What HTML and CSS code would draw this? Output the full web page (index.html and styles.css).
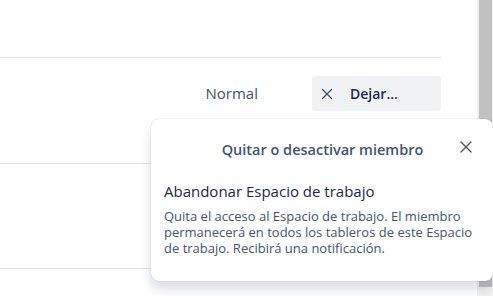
FILE: index.html
```html
<!DOCTYPE html>
<html lang="es">
<head>
<meta charset="utf-8">
<link rel="stylesheet" href="styles.css">
</head>
<body>
<div class="page">
  <div class="content">
    <div class="row row-top"></div>
    <div class="row row-member">
      <span class="role">Normal</span>
      <button class="leave-btn" type="button">
        <svg class="x-icon" width="12" height="12" viewBox="0 0 12 12" aria-hidden="true"><path d="M1.5 1.5 L10.5 10.5 M10.5 1.5 L1.5 10.5" stroke="currentColor" stroke-width="1.3" stroke-linecap="round"/></svg>
        <span>Dejar...</span>
      </button>
    </div>
    <div class="row row-empty"></div>
  </div>
  <div class="scrollbar"><div class="thumb"></div></div>
</div>

<div class="popover">
  <div class="pop-header">
    <span class="pop-title">Quitar o desactivar miembro</span>
    <button class="pop-close" type="button" aria-label="Cerrar">
      <svg width="12" height="12" viewBox="0 0 12 12" aria-hidden="true"><path d="M1 1 L11 11 M11 1 L1 11" stroke="currentColor" stroke-width="1.3" stroke-linecap="round"/></svg>
    </button>
  </div>
  <div class="pop-body">
    <div class="option-title">Abandonar Espacio de trabajo</div>
    <p class="option-desc">Quita el acceso al Espacio de trabajo. El miembro permanecerá en todos los tableros de este Espacio de trabajo. Recibirá una notificación.</p>
  </div>
</div>
</body>
</html>
```

FILE: styles.css
```css
html, body {
  margin: 0;
  padding: 0;
  background: #ffffff;
  font-family: "Open Sans", "Noto Sans", sans-serif;
  color: #172b4d;
}

.page {
  display: flex;
  height: 296px;
  overflow: hidden;
}

.content {
  width: 441px;
  flex: none;
}

.row {
  border-bottom: 1px solid #dfe1e6;
  box-sizing: border-box;
}

.row-top {
  height: 58px;
}

.row-member {
  height: 106px;
  display: flex;
  align-items: flex-start;
  justify-content: flex-end;
  padding-top: 18px;
}

.row-empty {
  height: 105px;
}

.role {
  font-size: 15px;
  color: #44546f;
  line-height: 35px;
  margin-right: 54px;
}

.leave-btn {
  display: flex;
  align-items: center;
  gap: 17px;
  width: 129px;
  height: 35px;
  box-sizing: border-box;
  padding: 0 0 0 9px;
  border: none;
  border-radius: 3px;
  background: #f1f2f4;
  color: #172b4d;
  font-family: inherit;
  font-size: 14px;
  font-weight: 600;
}

.x-icon {
  color: #44546f;
}

.scrollbar {
  margin-left: 36px;
  width: 16px;
  background: #f1f1f1;
  padding: 0 1px 0 2px;
  box-sizing: border-box;
}

.thumb {
  height: 287px;
  background: #c1c1c1;
}

.popover {
  position: absolute;
  left: 151px;
  top: 119px;
  width: 342px;
  height: 162px;
  box-sizing: border-box;
  background: #ffffff;
  border-radius: 8px;
  box-shadow: 0 8px 12px rgba(9, 30, 66, 0.15), 0 0 1px rgba(9, 30, 66, 0.31);
  padding: 0 12px 0 13px;
}

.pop-header {
  position: relative;
  height: 56px;
  display: flex;
  align-items: center;
  justify-content: center;
}

.pop-title {
  font-size: 14.5px;
  font-weight: 600;
  color: #44546f;
  margin-top: 5px;
}

.pop-close {
  position: absolute;
  right: 9px;
  top: 22px;
  padding: 0;
  border: none;
  background: none;
  color: #44546f;
  display: flex;
}

.pop-body {
  padding-top: 6px;
}

.option-title {
  font-size: 15px;
  line-height: 20px;
  color: #172b4d;
}

.option-desc {
  margin: 7px 0 0;
  font-size: 13px;
  line-height: 16px;
  color: #44546f;
}
```
